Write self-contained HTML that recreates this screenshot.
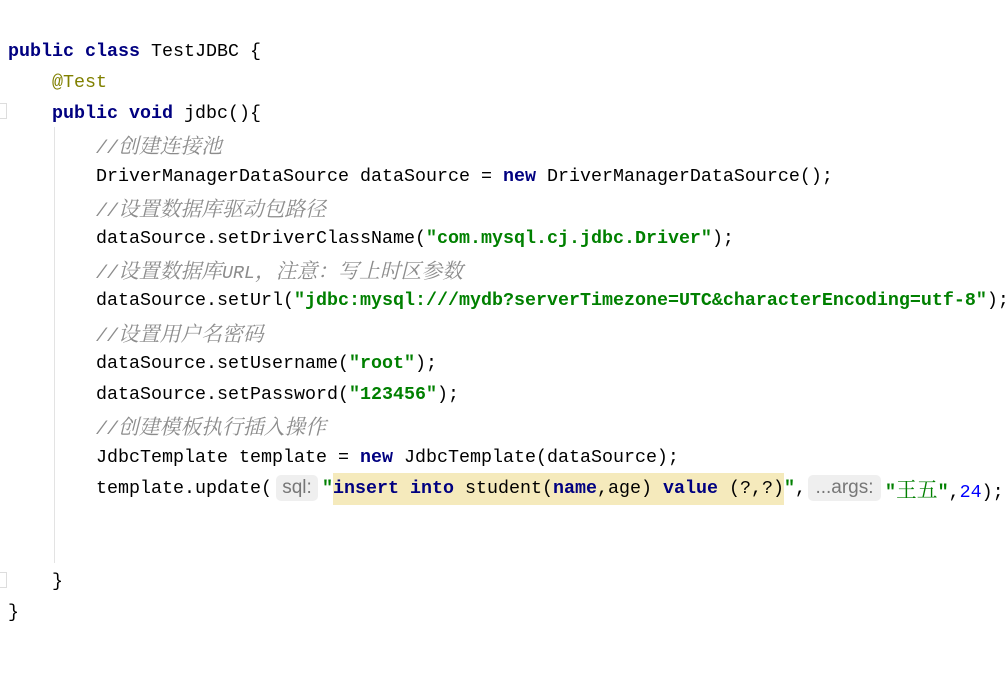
<!DOCTYPE html>
<html><head><meta charset="utf-8"><style>
html,body{margin:0;padding:0;background:#fff;width:1005px;height:673px;overflow:hidden;position:relative}
.l{position:absolute;white-space:pre;font-family:"Liberation Mono","Noto Sans CJK SC",monospace;font-size:18.33px;line-height:31px;height:31px;color:#000}
.k{color:#000080;font-weight:bold}
.s{color:#008000;font-weight:bold}
.c{color:#8c8c8c;font-style:italic}
.cj{font-family:"Noto Serif CJK SC",serif;font-size:20.8px;font-style:italic;font-weight:normal}
.cjn{font-family:"Noto Serif CJK SC",serif;font-size:20.8px;font-weight:normal}
.a{color:#808000}
.n{color:#0000ff}
.h{display:inline-block;background:#efefef;border-radius:5px;color:#777;font-family:"Liberation Sans",sans-serif;font-size:19px;line-height:26px;height:26px;vertical-align:middle;text-align:center;font-weight:normal}
.y{background:#f5eabc;padding:5px 0 6px}
.g{position:absolute;left:54px;top:127px;width:1px;height:436px;background:#e3e3e3}
</style></head><body>
<div class="g"></div>
<div style="position:absolute;left:0;top:103px;width:6px;height:14px;border:1px solid #ddd;border-left:none"></div>
<div style="position:absolute;left:0;top:572px;width:6px;height:14px;border:1px solid #ddd;border-left:none"></div>
<div class="l" style="left:8px;top:36px"><span class="k">public class</span> TestJDBC {</div>
<div class="l" style="left:52px;top:67px"><span class="a">@Test</span></div>
<div class="l" style="left:52px;top:98px"><span class="k">public void</span> jdbc(){</div>
<div class="l" style="left:96px;top:129px"><span class="c">//<span class="cj">创建连接池</span></span></div>
<div class="l" style="left:96px;top:161px">DriverManagerDataSource dataSource = <span class="k">new</span> DriverManagerDataSource();</div>
<div class="l" style="left:96px;top:192px"><span class="c">//<span class="cj">设置数据库驱动包路径</span></span></div>
<div class="l" style="left:96px;top:223px">dataSource.setDriverClassName(<span class="s">"com.mysql.cj.jdbc.Driver"</span>);</div>
<div class="l" style="left:96px;top:254px"><span class="c">//<span class="cj">设置数据库</span>URL<span class="cj">，注意：写上时区参数</span></span></div>
<div class="l" style="left:96px;top:285px">dataSource.setUrl(<span class="s">"jdbc:mysql:///mydb?serverTimezone=UTC&amp;characterEncoding=utf-8"</span>);</div>
<div class="l" style="left:96px;top:317px"><span class="c">//<span class="cj">设置用户名密码</span></span></div>
<div class="l" style="left:96px;top:348px">dataSource.setUsername(<span class="s">"root"</span>);</div>
<div class="l" style="left:96px;top:379px">dataSource.setPassword(<span class="s">"123456"</span>);</div>
<div class="l" style="left:96px;top:410px"><span class="c">//<span class="cj">创建模板执行插入操作</span></span></div>
<div class="l" style="left:96px;top:442px">JdbcTemplate template = <span class="k">new</span> JdbcTemplate(dataSource);</div>
<div class="l" style="left:96px;top:473px">template.update(</div>
<div class="h" style="position:absolute;left:276px;top:475px;width:42px">sql:</div>
<div class="l" style="left:322px;top:473px"><span class="s">"</span><span class="y"><span class="k">insert into</span> student(<span class="k">name</span>,age) <span class="k">value</span> (?,?)</span><span class="s">"</span>,</div>
<div class="h" style="position:absolute;left:808px;top:475px;width:73px">...args:</div>
<div class="l" style="left:885px;top:473px"><span class="s">"<span class="cjn">王五</span>"</span>,<span class="n">24</span>);</div>
<div class="l" style="left:52px;top:566px">}</div>
<div class="l" style="left:8px;top:597px">}</div>
</body></html>
